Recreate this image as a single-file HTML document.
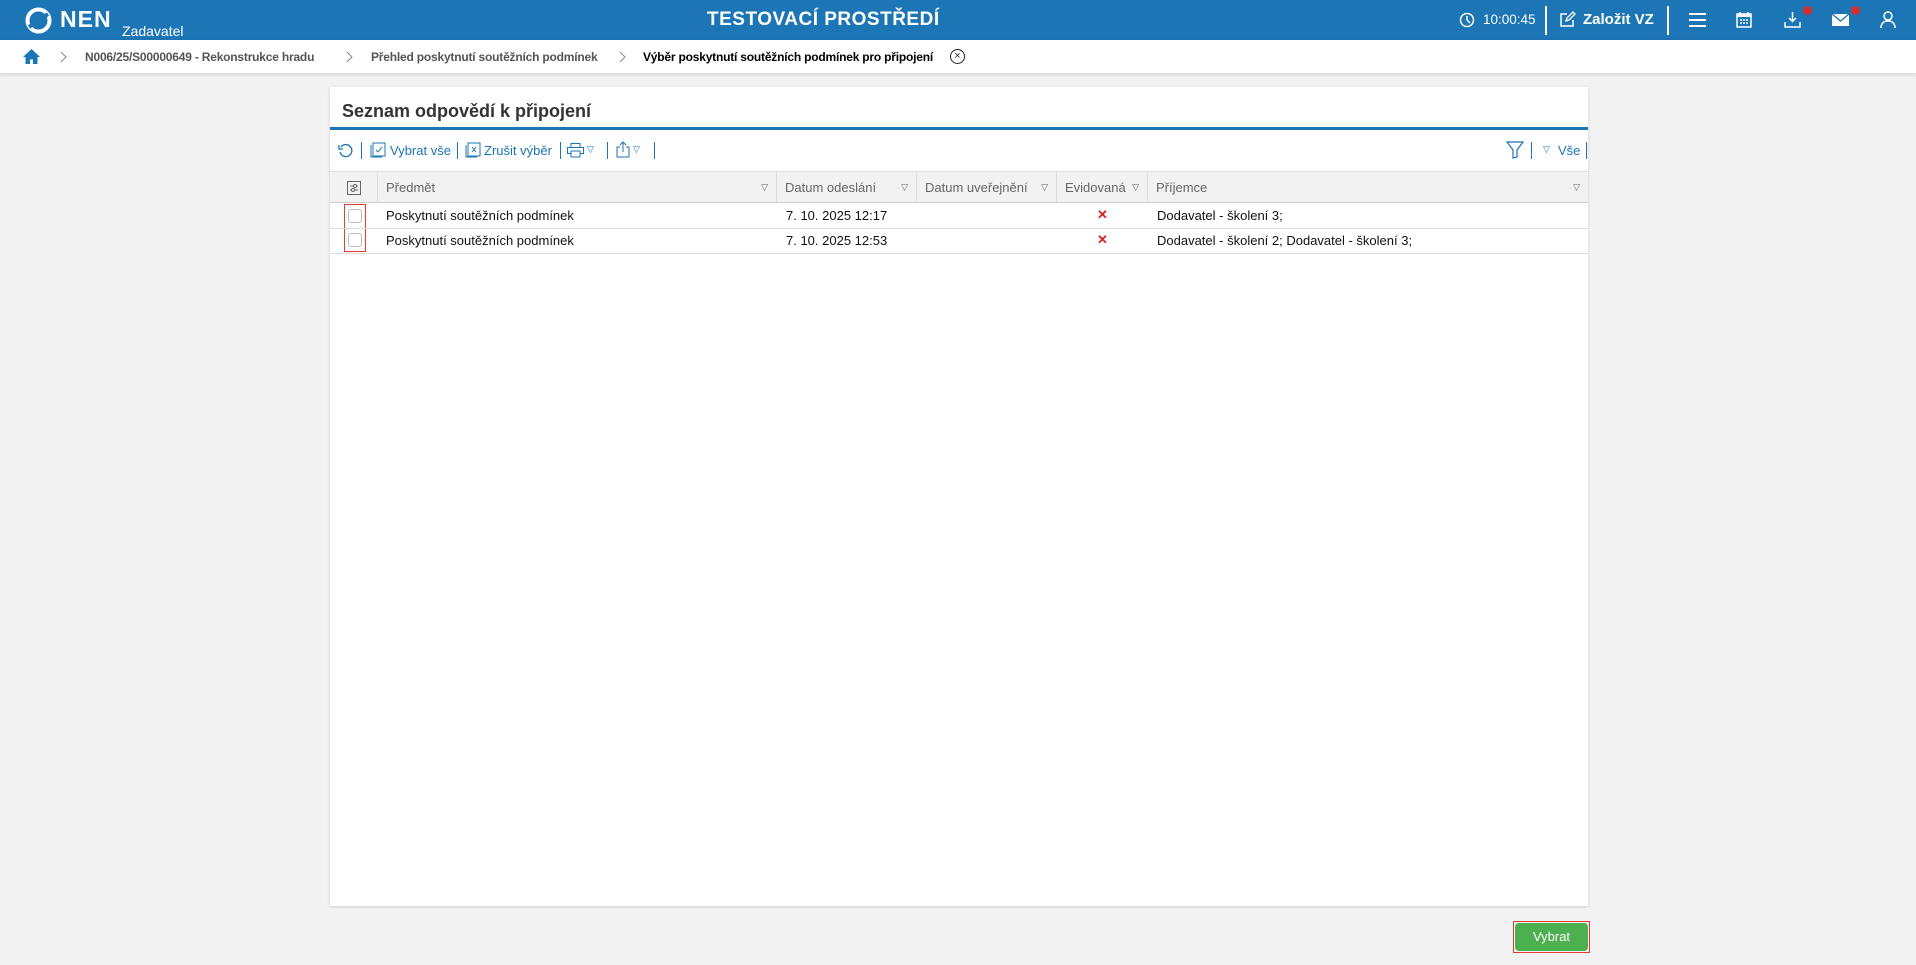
<!DOCTYPE html>
<html><head><meta charset="utf-8"><style>
*{box-sizing:border-box;margin:0;padding:0}
body{width:1916px;height:965px;background:#f2f2f2;font-family:"Liberation Sans",sans-serif;position:relative;overflow:hidden}
.hdr{position:absolute;left:0;top:0;width:1916px;height:40px;background:#1c75b4;color:#fff}
.bc{position:absolute;left:0;top:40px;width:1916px;height:33px;background:#fff;box-shadow:0 2px 4px rgba(0,0,0,.12);font-size:12px;font-weight:bold;color:#555;letter-spacing:-.2px}
.abs{position:absolute}
.panel{position:absolute;left:330px;top:87px;width:1258px;height:819px;background:#fff;box-shadow:0 1px 3px rgba(0,0,0,.15)}
.tb{color:#1c75b4;font-size:13px}
.sep{position:absolute;width:1px;height:17px;background:#1c75b4}
.th{position:absolute;top:84px;height:32px;background:#f2f2f2;border-right:1px solid #ddd;border-top:1px solid #ddd;border-bottom:1px solid #ccc;color:#666;font-size:13px;line-height:31px;padding-left:8px}
.th .ar{position:absolute;right:8px;top:0;font-size:9px}
.td{position:absolute;font-size:13px;color:#111;line-height:25px}
.rl{position:absolute;left:0;width:1258px;height:1px;background:#ddd}
.cb{position:absolute;left:18px;width:14px;height:14px;border:1px solid #bbb;border-radius:3px}
.x{position:absolute;color:#d22;font-weight:bold;font-size:13px}
</style></head><body>
<div class="hdr">
 <svg class="abs" style="left:25px;top:7px" width="27" height="27" viewBox="0 0 27 27"><circle cx="13.5" cy="13.5" r="11" fill="none" stroke="#fff" stroke-width="4"/><path d="M4 20 L23 7" stroke="#1c75b4" stroke-width="4"/></svg>
 <div class="abs" style="left:60px;top:6px;font-size:23px;font-weight:bold;letter-spacing:1px">NEN</div>
 <div class="abs" style="left:122px;top:23px;font-size:14px">Zadavatel</div>
 <div class="abs" style="left:707px;top:9px;font-size:19px;font-weight:bold;letter-spacing:.5px">TESTOVACÍ PROSTŘEDÍ</div>
 <svg class="abs" style="left:1459px;top:12px" width="16" height="16" viewBox="0 0 16 16"><circle cx="8" cy="8" r="6.5" fill="none" stroke="#fff" stroke-width="1.5"/><path d="M8 4v4l3 3" stroke="#fff" stroke-width="1.5" fill="none"/></svg>
 <div class="abs" style="left:1483px;top:12px;font-size:13.5px">10:00:45</div>
 <div class="abs" style="left:1545px;top:6px;width:2px;height:29px;background:#fff"></div>
 <svg class="abs" style="left:1559px;top:11px" width="17" height="17" viewBox="0 0 17 17"><path d="M8 3H2v12h12V9" fill="none" stroke="#fff" stroke-width="1.5"/><path d="M7 10l1-3 6-6 2 2-6 6z" fill="none" stroke="#fff" stroke-width="1.3"/></svg>
 <div class="abs" style="left:1583px;top:11px;font-size:15px;font-weight:bold">Založit VZ</div>
 <div class="abs" style="left:1667px;top:6px;width:2px;height:29px;background:#fff"></div>
 <svg class="abs" style="left:1689px;top:13px" width="17" height="14"><rect y="0" width="17" height="2" fill="#fff"/><rect y="6" width="17" height="2" fill="#fff"/><rect y="12" width="17" height="2" fill="#fff"/></svg>
 <svg class="abs" style="left:1736px;top:11px" width="16" height="17" viewBox="0 0 16 17"><rect x="1" y="3" width="14" height="13" fill="none" stroke="#fff" stroke-width="1.5"/><rect x="1" y="3" width="14" height="3" fill="#fff"/><path d="M4 1v3M12 1v3" stroke="#fff" stroke-width="1.5"/><path d="M4 9h2M7 9h2M10 9h2M4 12h2M7 12h2M10 12h2" stroke="#fff" stroke-width="1.5"/></svg>
 <svg class="abs" style="left:1784px;top:11px" width="17" height="17" viewBox="0 0 17 17"><path d="M8.5 1v9M5 7l3.5 3.5L12 7" fill="none" stroke="#fff" stroke-width="1.5"/><path d="M1 11v5h15v-5" fill="none" stroke="#fff" stroke-width="1.5"/></svg>
 <div class="abs" style="left:1803px;top:6px;width:9px;height:9px;border-radius:50%;background:#d32f2f"></div>
 <svg class="abs" style="left:1832px;top:14px" width="17" height="12"><rect width="17" height="12" fill="#fff"/><path d="M0 0l8.5 7L17 0" fill="none" stroke="#1c75b4" stroke-width="1.3"/></svg>
 <div class="abs" style="left:1851px;top:6px;width:9px;height:9px;border-radius:50%;background:#d32f2f"></div>
 <svg class="abs" style="left:1880px;top:11px" width="16" height="18" viewBox="0 0 16 18"><circle cx="8" cy="5" r="4" fill="none" stroke="#fff" stroke-width="1.5"/><path d="M1 17c0-5 3-7 7-7s7 2 7 7" fill="none" stroke="#fff" stroke-width="1.5"/></svg>
</div>
<div class="bc">
 <svg class="abs" style="left:23px;top:9px" width="17" height="15" viewBox="0 0 17 15"><path d="M8.5 0L0 8h2.5v7h4.5v-4.5h3V15h4.5V8H17z" fill="#1c75b4"/></svg>
 <svg class="abs" style="left:60px;top:11px" width="7" height="12"><path d="M1 1l5 5-5 5" fill="none" stroke="#888"/></svg>
 <div class="abs" style="left:85px;top:10px">N006/25/S00000649 - Rekonstrukce hradu</div>
 <svg class="abs" style="left:346px;top:11px" width="7" height="12"><path d="M1 1l5 5-5 5" fill="none" stroke="#888"/></svg>
 <div class="abs" style="left:371px;top:10px">Přehled poskytnutí soutěžních podmínek</div>
 <svg class="abs" style="left:619px;top:11px" width="7" height="12"><path d="M1 1l5 5-5 5" fill="none" stroke="#888"/></svg>
 <div class="abs" style="left:643px;top:10px;color:#000">Výběr poskytnutí soutěžních podmínek pro připojení</div>
 <div class="abs" style="left:950px;top:9px;width:15px;height:15px;border:1.5px solid #222;border-radius:50%;font-size:11px;line-height:12px;text-align:center;color:#222;font-weight:normal;letter-spacing:0">×</div>
</div>
<div class="panel">
 <div class="abs" style="left:12px;top:14px;font-size:18px;font-weight:bold;color:#333">Seznam odpovědí k připojení</div>
 <div class="abs" style="left:0;top:40px;width:1258px;height:3px;background:#1c75b4"></div>
 <div class="tb">
  <svg class="abs" style="left:8px;top:56px" width="15" height="15" viewBox="0 0 15 15"><path d="M3 4A6 6 0 1 1 2 9" fill="none" stroke="#1c75b4" stroke-width="1.3"/><path d="M1 2v4h4" fill="none" stroke="#1c75b4" stroke-width="1.3"/></svg>
  <div class="sep" style="left:31px;top:55px"></div>
  <svg class="abs" style="left:40px;top:55px" width="16" height="16"><rect x="3" y="1" width="12" height="13" fill="none" stroke="#1c75b4"/><path d="M1 3v12h11" fill="none" stroke="#1c75b4"/><path d="M6 8l2 2 4-5" fill="none" stroke="#1c75b4"/></svg>
  <div class="abs" style="left:60px;top:56px">Vybrat vše</div>
  <div class="sep" style="left:127px;top:55px"></div>
  <svg class="abs" style="left:135px;top:55px" width="16" height="16"><rect x="3" y="1" width="12" height="13" fill="none" stroke="#1c75b4"/><path d="M1 3v12h11" fill="none" stroke="#1c75b4"/><path d="M7 5l4 5M11 5l-4 5" stroke="#1c75b4"/></svg>
  <div class="abs" style="left:154px;top:56px">Zrušit výběr</div>
  <div class="sep" style="left:230px;top:55px"></div>
  <svg class="abs" style="left:237px;top:56px" width="17" height="15"><rect x="4" y="0.5" width="9" height="4" fill="none" stroke="#1c75b4"/><rect x="0.5" y="4.5" width="16" height="6" fill="none" stroke="#1c75b4"/><rect x="4" y="8" width="9" height="6" fill="#fff" stroke="#1c75b4"/></svg>
  <div class="abs" style="left:257px;top:57px;font-size:9px">▽</div>
  <div class="sep" style="left:277px;top:55px"></div>
  <svg class="abs" style="left:286px;top:54px" width="14" height="17"><path d="M4 6H1v10h12V6h-3M7 11V1M4 4l3-3 3 3" fill="none" stroke="#1c75b4"/></svg>
  <div class="abs" style="left:303px;top:57px;font-size:9px">▽</div>
  <div class="sep" style="left:324px;top:55px"></div>
  <svg class="abs" style="left:1176px;top:54px" width="18" height="18"><path d="M1 1h16l-6 8v7l-4 1V9z" fill="none" stroke="#1c75b4" stroke-width="1.2"/></svg>
  <div class="sep" style="left:1201px;top:55px"></div>
  <div class="abs" style="left:1213px;top:57px;font-size:9px">▽</div>
  <div class="abs" style="left:1228px;top:56px">Vše</div>
  <div class="sep" style="left:1256px;top:55px"></div>
 </div>
 <div class="th" style="left:0;width:48px"><svg style="position:absolute;left:17px;top:9px" width="14" height="14"><rect x=".5" y=".5" width="13" height="13" fill="none" stroke="#666"/><path d="M3 5h8M3 9h8" stroke="#666"/><circle cx="8" cy="5" r="1.5" fill="#fff" stroke="#666"/><circle cx="6" cy="9" r="1.5" fill="#fff" stroke="#666"/></svg></div>
 <div class="th" style="left:48px;width:399px">Předmět<span class="ar">▽</span></div>
 <div class="th" style="left:447px;width:140px">Datum odeslání<span class="ar">▽</span></div>
 <div class="th" style="left:587px;width:140px">Datum uveřejnění<span class="ar">▽</span></div>
 <div class="th" style="left:727px;width:91px">Evidovaná<span class="ar">▽</span></div>
 <div class="th" style="left:818px;width:440px;border-right:none">Příjemce<span class="ar">▽</span></div>
 <div class="cb" style="top:122px"></div>
 <div class="cb" style="top:146px"></div>
 <div class="abs" style="left:14px;top:117px;width:22px;height:48px;border:1px solid #e53935"></div>
 <div class="td" style="left:56px;top:116px">Poskytnutí soutěžních podmínek</div>
 <div class="td" style="left:456px;top:116px">7. 10. 2025 12:17</div>
 <div class="x" style="left:767px;top:120px">✕</div>
 <div class="td" style="left:827px;top:116px">Dodavatel - školení 3;</div>
 <div class="rl" style="top:141px"></div>
 <div class="td" style="left:56px;top:141px">Poskytnutí soutěžních podmínek</div>
 <div class="td" style="left:456px;top:141px">7. 10. 2025 12:53</div>
 <div class="x" style="left:767px;top:145px">✕</div>
 <div class="td" style="left:827px;top:141px">Dodavatel - školení 2; Dodavatel - školení 3;</div>
 <div class="rl" style="top:166px"></div>
</div>
<div class="abs" style="left:1513px;top:921px;width:77px;height:32px;border:1px solid #e53935;padding:1px">
 <div style="width:100%;height:100%;background:#4caf50;border-radius:4px;color:#fff;font-size:13px;text-align:center;line-height:28px">Vybrat</div>
</div>
</body></html>
